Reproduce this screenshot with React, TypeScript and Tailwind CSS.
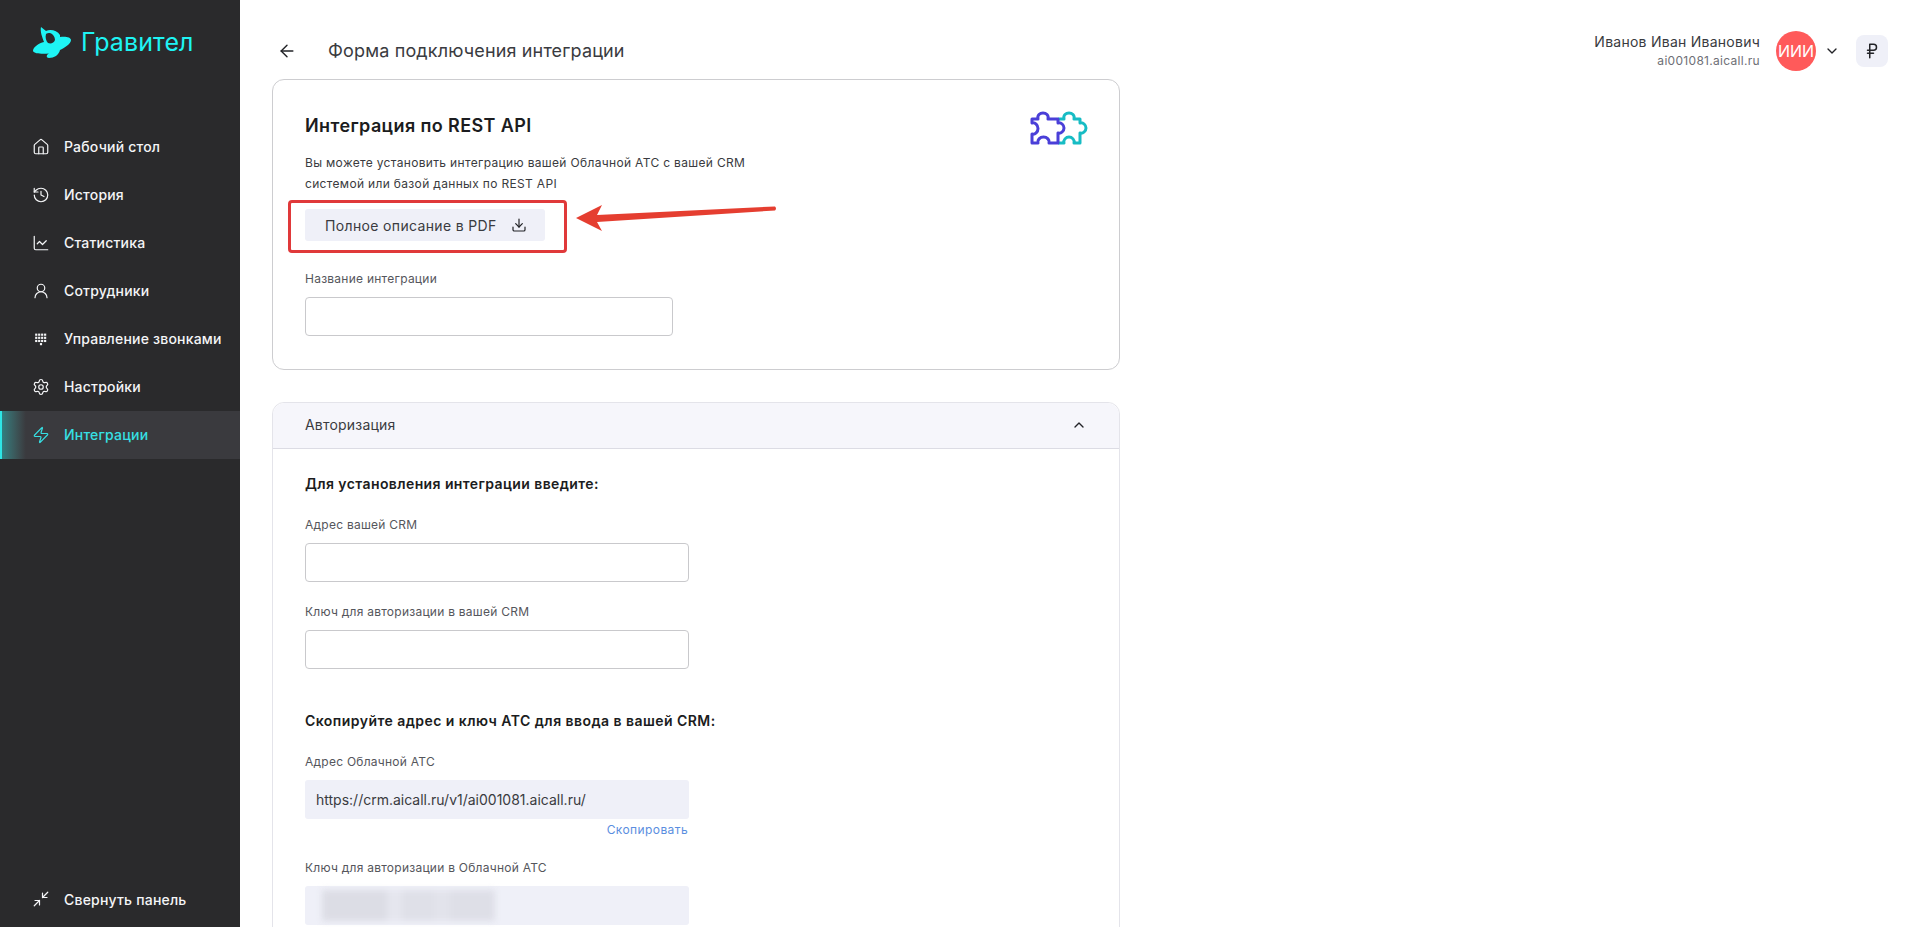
import React from 'react';
import {
  ArrowLeft,
  ChartLine,
  ChevronDown,
  ChevronUp,
  Download,
  History,
  House,
  Minimize2,
  RussianRuble,
  Settings,
  UserRound,
  Zap,
} from 'lucide-react';

function DialpadIcon() {
  const dots = [0, 1, 2, 3];
  return (
    <svg width="20" height="20" viewBox="0 0 20 20" fill="currentColor">
      {[4, 7.5, 11].map((y) =>
        dots.map((i) => <rect key={`${y}-${i}`} x={3.5 + i * 3.3} y={y} width="2.4" height="2.4" />),
      )}
      <rect x="8.8" y="14.5" width="2.4" height="2.4" />
    </svg>
  );
}

function LogoMark() {
  return (
    <svg width="40" height="33" viewBox="0 0 40 33" fill="#1ef4f4">
      <path
        fillRule="evenodd"
        d="M9 1 L14 5 C18 3 25 4 28 9 L28 11 C33 10 39 11 39 14 C39 18 32 22 28 24 C27 29 22 32 17 32 C14 32 14 29 17 27.5 C11 28 2 28 1 25 C1 21 7 17 12 16 C10 11 8 5 9 1 Z M14 8 C13 11 14 15 16 17 C19 18 22 17 23 14 C23 11 21 8 18 7 C16 7 15 7 14 8 Z"
      />
    </svg>
  );
}

function PuzzleIcon() {
  return (
    <svg width="58" height="34" viewBox="0 0 58 34" fill="none" strokeWidth="3" strokeLinejoin="round">
      <path
        stroke="#17bcc4"
        d="M28 8 H34 C33 4 36 2 39 2 C42 2 45 4 44 8 H50 V12 C53 11 56 14 56 17 C56 20 53 23 50 22 V32 H44 C45 29 42 26 39 26 C36 26 33 29 34 32 H28"
      />
      <path
        stroke="#4a3fd8"
        d="M2 8 H8 C7 4 10 2 13 2 C16 2 19 4 18 8 H28 V12 C31 11 34 14 34 17 C34 20 31 23 28 22 V32 H19 C20 29 17 26 13.5 26 C10 26 7 29 8 32 H2 V23 C5 24 8 21 8 17.5 C8 14 5 11 2 12 Z"
      />
    </svg>
  );
}

function AnnotationArrow() {
  return (
    <svg
      className="absolute left-[303px] top-[124px]"
      width="202"
      height="30"
      viewBox="0 0 202 30"
      fill="#e53e30"
    >
      <path d="M0 14 L26 1 L21 11 L199 2.5 Q201 4.5 199 6.5 L21 18 L26 27 Z" />
    </svg>
  );
}

const navItems = [
  { label: 'Рабочий стол', icon: <House size={18} strokeWidth={1.6} /> },
  { label: 'История', icon: <History size={18} strokeWidth={1.6} /> },
  { label: 'Статистика', icon: <ChartLine size={18} strokeWidth={1.6} /> },
  { label: 'Сотрудники', icon: <UserRound size={18} strokeWidth={1.6} /> },
  { label: 'Управление звонками', icon: <DialpadIcon /> },
  { label: 'Настройки', icon: <Settings size={18} strokeWidth={1.6} /> },
  { label: 'Интеграции', icon: <Zap size={18} strokeWidth={1.6} />, active: true },
];

function Sidebar() {
  return (
    <aside className="flex h-full w-[240px] shrink-0 flex-col bg-[#2a2a2c] text-[#f4f5f7]">
      <div className="flex h-[123px] items-start gap-[9px] pl-[32px] pt-[26px]">
        <LogoMark />
        <span className="text-[25px] leading-[32px] font-normal tracking-[0.1px] text-[#1ef4f4]">Гравител</span>
      </div>
      <nav className="flex flex-1 flex-col">
        {navItems.map((item) =>
          item.active ? (
            <div
              key={item.label}
              className="flex h-[48px] items-center gap-[14px] border-l-2 border-[#2ee6e6] bg-gradient-to-r from-[#2f7f80] via-[#3a3a3e] via-[10%] to-[#3a3a3e] pb-[1px] pl-[30px] text-[14px] font-medium tracking-[0.2px] text-[#36e0e4]"
            >
              <span className="flex w-[18px] justify-center">{item.icon}</span>
              {item.label}
            </div>
          ) : (
            <div
              key={item.label}
              className="flex h-[48px] items-center gap-[14px] pb-[1px] pl-[32px] text-[14px] font-medium tracking-[0.2px]"
            >
              <span className="flex w-[18px] justify-center">{item.icon}</span>
              {item.label}
            </div>
          ),
        )}
      </nav>
      <div className="mb-[4px] flex h-[48px] items-center gap-[14px] pl-[32px] text-[14px] font-medium tracking-[0.2px]">
        <Minimize2 size={18} strokeWidth={1.6} />
        Свернуть панель
      </div>
    </aside>
  );
}

function Field({ label, width }: { label: string; width: string }) {
  return (
    <div className={width}>
      <div className="text-[12px] leading-[16px] tracking-[0.25px] text-[#55565c]">{label}</div>
      <div className="mt-[10px] h-[39px] rounded-[4px] border border-[#c9c9cc] bg-white" />
    </div>
  );
}

function TopCard() {
  return (
    <section className="relative h-[291px] w-[848px] rounded-[12px] border border-[#cdcdd0] px-[32px] pt-[33px]">
      <div className="absolute right-[31px] top-[31px]">
        <PuzzleIcon />
      </div>
      <h1 className="text-[18px] leading-[26px] font-semibold tracking-[0.4px] text-[#1b1c20]">Интеграция по REST API</h1>
      <p className="mt-[13px] w-[470px] text-[12px] leading-[21px] tracking-[0.33px] text-[#3a3b40]">
        Вы можете установить интеграцию вашей Облачной АТС с вашей CRM системой или базой данных по REST API
      </p>
      <button className="mt-[15px] flex h-[32px] w-[240px] items-center gap-[14px] rounded-[3px] bg-[#eff0f8] pl-[20px] text-[14px] tracking-[0.35px] text-[#3a3b40]">
        Полное описание в PDF
        <Download size={16} strokeWidth={1.8} className="text-[#222327]" />
      </button>
      <div className="mt-[30px]">
        <Field label="Название интеграции" width="w-[368px]" />
      </div>
      <div className="absolute left-[15px] top-[120px] h-[53px] w-[279px] rounded-[4px] border-[3px] border-[#e0393a]" />
      <AnnotationArrow />
    </section>
  );
}

function AuthCard() {
  return (
    <section className="mt-[32px] w-[848px] rounded-t-[12px] border border-[#e4e4ea]">
      <div className="flex h-[46px] items-center justify-between rounded-t-[12px] border-b border-[#dcdce4] bg-[#f6f6fb] pb-[2px] pl-[32px] pr-[32px] text-[14px] tracking-[0.2px] text-[#3a3b40]">
        Авторизация
        <ChevronUp size={16} strokeWidth={2} className="text-[#222327]" />
      </div>
      <div className="px-[32px] pb-[60px] pt-[25px]">
        <h2 className="text-[14px] leading-[20px] font-semibold tracking-[0.4px] text-[#1b1c20]">
          Для установления интеграции введите:
        </h2>
        <div className="mt-[23px] flex flex-col gap-[22px]">
          <Field label="Адрес вашей CRM" width="w-[384px]" />
          <Field label="Ключ для авторизации в вашей CRM" width="w-[384px]" />
        </div>
        <h2 className="mt-[42px] text-[14px] leading-[20px] font-semibold tracking-[0.45px] text-[#1b1c20]">
          Скопируйте адрес и ключ АТС для ввода в вашей CRM:
        </h2>
        <div className="mt-[23px] w-[384px]">
          <div className="text-[12px] leading-[16px] tracking-[0.25px] text-[#55565c]">Адрес Облачной АТС</div>
          <div className="mt-[10px] flex h-[39px] items-center rounded-[3px] bg-[#eff0f8] pl-[11px] text-[14px] text-[#3a3b40]">
            https://crm.aicall.ru/v1/ai001081.aicall.ru/
          </div>
          <div className="mt-[3px] pr-[1px] text-right text-[12px] leading-[16px] tracking-[0.4px] text-[#5a8ee0]">
            Скопировать
          </div>
        </div>
        <div className="mt-[22px] w-[384px]">
          <div className="text-[12px] leading-[16px] tracking-[0.25px] text-[#55565c]">
            Ключ для авторизации в Облачной АТС
          </div>
          <div className="mt-[10px] flex h-[39px] items-center rounded-[3px] bg-[#eff0f8] pl-[17px]">
            <div className="flex h-[31px] blur-[3px]">
              <div className="w-[65px] bg-[#dcdde5]" />
              <div className="w-[15px] bg-[#e5e6ee]" />
              <div className="w-[32px] bg-[#dfe0e8]" />
              <div className="w-[16px] bg-[#e2e3eb]" />
              <div className="w-[45px] bg-[#dedfe7]" />
            </div>
          </div>
        </div>
      </div>
    </section>
  );
}

function Header() {
  return (
    <header className="flex h-[79px] items-center justify-between pt-[22px] pr-[20px]">
      <div className="flex items-center gap-[31px] pl-[5px]">
        <ArrowLeft size={20} strokeWidth={1.7} className="text-[#222327]" />
        <span className="text-[18px] tracking-[0.15px] text-[#3a3b40]">Форма подключения интеграции</span>
      </div>
      <div className="flex items-center">
        <div className="text-right">
          <div className="text-[14px] leading-[18px] tracking-[0.25px] text-[#3a3b40]">Иванов Иван Иванович</div>
          <div className="mt-[2px] text-[12px] leading-[16px] tracking-[0.3px] text-[#6e6f76]">ai001081.aicall.ru</div>
        </div>
        <div className="ml-[16px] flex h-[40px] w-[40px] items-center justify-center rounded-full bg-[#ff5a5a] text-[16px] text-white">
          ИИИ
        </div>
        <ChevronDown size={16} strokeWidth={2} className="ml-[8px] text-[#222327]" />
        <div className="ml-[16px] flex h-[32px] w-[32px] items-center justify-center rounded-[8px] bg-[#eff0f8]">
          <RussianRuble size={18} strokeWidth={2} className="text-[#222327]" />
        </div>
      </div>
    </header>
  );
}

export default function App() {
  return (
    <div className="flex h-screen overflow-hidden bg-white font-['Inter',sans-serif]">
      <Sidebar />
      <main className="flex-1 overflow-hidden pl-[32px]">
        <Header />
        <TopCard />
        <AuthCard />
      </main>
    </div>
  );
}
